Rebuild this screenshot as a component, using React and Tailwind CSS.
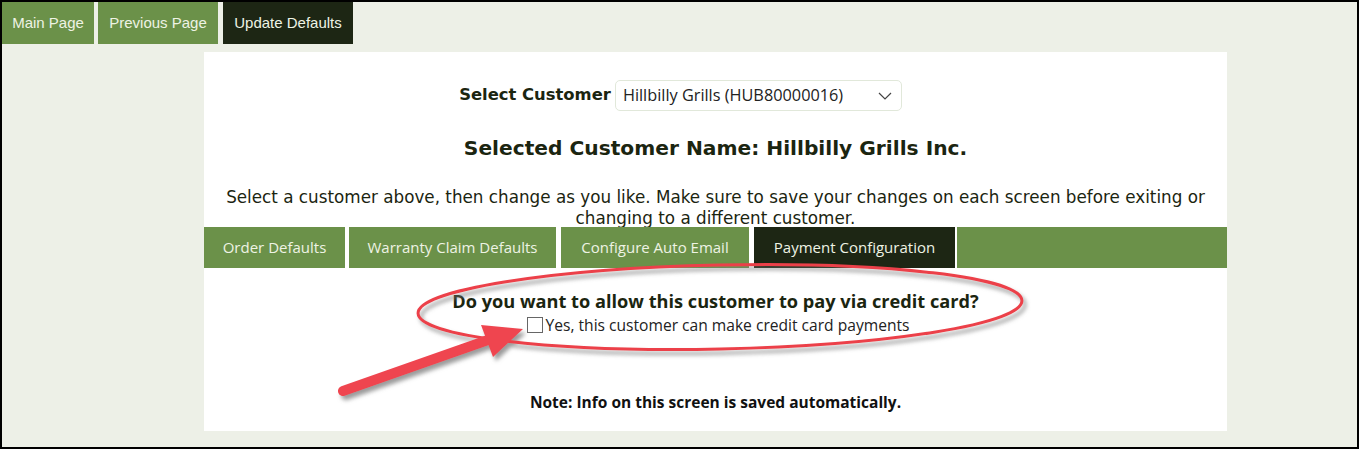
import React from "react";

const navTabs = [
  { label: "Main Page", w: "w-[92px]", active: false },
  { label: "Previous Page", w: "w-[120px]", active: false },
  { label: "Update Defaults", w: "w-[130px]", active: true },
];

const subTabs = [
  { label: "Order Defaults", w: "w-[145px] border-r-[4px]", active: false },
  { label: "Warranty Claim Defaults", w: "w-[212px] border-r-[5px]", active: false },
  { label: "Configure Auto Email", w: "w-[193px] border-r-[5px]", active: false },
  { label: "Payment Configuration", w: "w-[203px] border-r-[2px]", active: true },
];

const Annotation = () => (
  <svg
    className="absolute left-0 top-0 pointer-events-none"
    width="1359"
    height="449"
    viewBox="0 0 1359 449"
  >
    <defs>
      <filter id="shadow" x="-10%" y="-30%" width="120%" height="160%">
        <feDropShadow dx="3" dy="4" stdDeviation="2" floodColor="#7a7a7a" floodOpacity="0.75" />
      </filter>
    </defs>
    <g filter="url(#shadow)">
      <ellipse
        cx="718"
        cy="305"
        rx="302"
        ry="42"
        transform="rotate(-1.2 718 305)"
        fill="none"
        stroke="#ec4149"
        strokeWidth="3"
      />
      <line
        x1="341"
        y1="389"
        x2="486"
        y2="338"
        stroke="#ef4550"
        strokeWidth="10"
        strokeLinecap="round"
      />
      <polygon points="521,327 479,323 491,355" fill="#ef4550" />
    </g>
  </svg>
);

export default function App() {
  return (
    <div className="relative w-[1359px] h-[449px] box-border border-2 border-black bg-[#edf0e7] overflow-hidden font-['Liberation_Sans',sans-serif]">
      <div className="flex h-[42px] gap-[4px]">
        {navTabs.map((t) => (
          <div
            key={t.label}
            className={`${t.w} flex items-center justify-center text-[15px] text-[#eef3e4] ${
              t.active ? "bg-[#1d2614] ml-[1px]" : "bg-[#6b9149]"
            }`}
          >
            {t.label}
          </div>
        ))}
      </div>

      <div className="ml-[202px] mt-[8px] w-[1023px] h-[379px] bg-white flex flex-col items-center text-[#1b2510]">
        <div className="mt-[28px] flex items-center gap-[4px] mr-[70px]">
          <span className="font-['DejaVu_Sans',sans-serif] font-bold text-[16.4px]">
            Select Customer
          </span>
          <div className="w-[287px] h-[31px] border border-[#e1e8da] rounded-[5px] flex items-center justify-between pl-[7px] pr-[9px]">
            <span className="font-['Open_Sans',sans-serif] text-[16.3px] text-[#222]">
              Hillbilly Grills (HUB80000016)
            </span>
            <svg width="14" height="8" viewBox="0 0 14 8">
              <path d="M1 1 L7 7 L13 1" fill="none" stroke="#444" strokeWidth="1.2" />
            </svg>
          </div>
        </div>

        <h1 className="mt-[24px] font-['DejaVu_Sans',sans-serif] font-bold text-[20.2px] leading-[27px]">
          Selected Customer Name: Hillbilly Grills Inc.
        </h1>

        <p className="mt-[25px] w-[1000px] text-center font-['DejaVu_Sans',sans-serif] text-[16.8px] leading-[21px]">
          Select a customer above, then change as you like. Make sure to save your changes on each screen before exiting or changing to a different customer.
        </p>

        <div className="mt-[-2px] w-full h-[41px] flex bg-[#6b9149]">
          {subTabs.map((t) => (
            <div
              key={t.label}
              className={`${t.w} shrink-0 border-white flex items-center justify-center font-['Open_Sans',sans-serif] text-[15px] text-[#eef3e4] ${
                t.active ? "bg-[#1d2614]" : "bg-[#6b9149]"
              }`}
            >
              {t.label}
            </div>
          ))}
          <div className="flex-1" />
        </div>

        <div className="mt-[20px] font-['Open_Sans',sans-serif] font-bold text-[18.2px] leading-[26px]">
          Do you want to allow this customer to pay via credit card?
        </div>
        <label className="mt-[-1px] ml-[5px] flex items-center gap-[3px] font-['Open_Sans',sans-serif] text-[15.6px] leading-[24px] text-[#222]">
          <span className="w-[16px] h-[16px] border border-[#666] bg-white inline-block" />
          Yes, this customer can make credit card payments
        </label>

        <div className="mt-[53px] font-['Open_Sans',sans-serif] font-bold text-[15.5px] leading-[24px] text-[#111]">
          Note: Info on this screen is saved automatically.
        </div>
      </div>

      <Annotation />
    </div>
  );
}
